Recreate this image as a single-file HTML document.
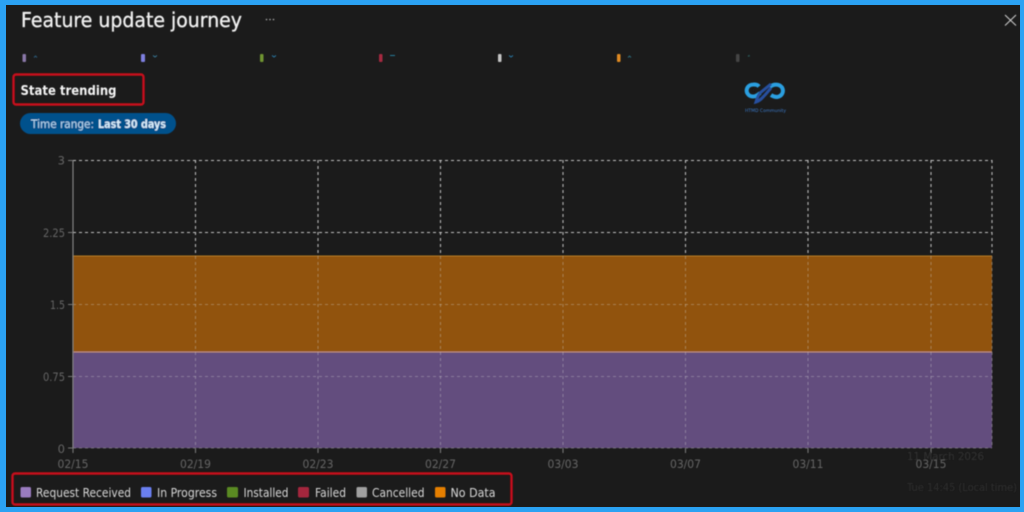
<!DOCTYPE html>
<html><head><meta charset="utf-8"><style>
html,body{margin:0;padding:0;width:1024px;height:512px;overflow:hidden;background:#2ba2f3}
svg{display:block;font-family:"DejaVu Sans","Liberation Sans",sans-serif}
</style></head><body>
<svg width="1024" height="512" viewBox="0 0 1024 512" xmlns="http://www.w3.org/2000/svg">
<defs>
<filter id="b"><feGaussianBlur stdDeviation="0.45"/></filter>
<filter id="g"><feGaussianBlur stdDeviation="0.4"/></filter>
</defs>
<rect width="1024" height="512" fill="#2ba2f3"/>
<rect x="6" y="5" width="1014" height="502" fill="#1b1b1b"/>
<g filter="url(#b)">
<text x="21" y="27" font-size="20" fill="#f2f2f2" stroke="#f2f2f2" stroke-width=".3" textLength="221" lengthAdjust="spacingAndGlyphs">Feature update journey</text>
<g fill="#b0b0b0"><circle cx="266.500" cy="19.500" r=".8"/><circle cx="270" cy="19.500" r=".8"/><circle cx="273.500" cy="19.500" r=".8"/></g>
<path d="M1005 15L1016 25.500M1016 15L1005 25.500" stroke="#d0d0d0" stroke-width="1"/>

<rect x="22.500" y="54" width="3.500" height="8" rx="1" fill="#8a78a8"/>
<rect x="141" y="54" width="4" height="8" rx="1" fill="#7f80e0"/>
<rect x="260" y="54" width="3.500" height="8" rx="1" fill="#6f9430"/>
<rect x="379" y="54" width="3.500" height="8" rx="1" fill="#a52a3f"/>
<rect x="498" y="54" width="3.500" height="8" rx="1" fill="#c4c4c4"/>
<rect x="617" y="54" width="3.500" height="8" rx="1" fill="#e08a20"/>
<rect x="736" y="54" width="3.500" height="8" rx="1" fill="#444"/>
<g stroke-width="1" fill="none">
<path d="M34 57.500l1.500-1.500 1.500 1.500" stroke="#2a5a7a"/>
<path d="M153 55.500l2 1.500 2-1.500" stroke="#3a7a9a"/>
<path d="M272 55.500l2 1.500 2-1.500" stroke="#2a7aa8"/>
<path d="M390 55.500h5" stroke="#2a7a98"/>
<path d="M509 55.500l2 1.500 2-1.500" stroke="#2a7aa8"/>
<path d="M628 57.500l1.500-1.500 1.500 1.500" stroke="#2a6a7a"/>
<path d="M748 56.500l1-1 .5 1" stroke="#2a5a5a"/>
</g>

<rect x="13.500" y="74.500" width="130" height="30" rx="2.500" fill="none" stroke="#c8101a" stroke-width="2.400"/>
<text x="20.500" y="95" font-size="13" font-weight="700" fill="#f4f4f4" textLength="96" lengthAdjust="spacingAndGlyphs">State trending</text>

<rect x="20" y="113" width="156" height="21" rx="10.500" fill="#04518c"/>
<text x="31" y="128" font-size="11.500" fill="#b8d8f0" textLength="63" lengthAdjust="spacingAndGlyphs">Time range:</text>
<text x="98" y="128" font-size="11.500" font-weight="700" fill="#d8ecfa" textLength="68" lengthAdjust="spacingAndGlyphs">Last 30 days</text>

<g fill="none">
<path d="M759 86.500c-2-2.500-9-3-11.500 1-2.500 4.500 1 9 5.500 9 3 0 5-1.500 7-3.500" stroke="#2b9fe0" stroke-width="4"/>
<path d="M770 87c3-3 9-3.500 12 .5 2.500 4.500-.5 9-5 9.500-2.500 0-4-.5-6-2" stroke="#2b9fe0" stroke-width="4"/>
<path d="M771 84l-11 9c-2 2-3 6-4 9 4-1 6-4 9-7l6-7" stroke="#27509f" stroke-width="3"/>
<path d="M752 89.500l3 1.500" stroke="#1b1b1b" stroke-width="1.500"/>
</g>
<text x="745" y="112" font-size="4.500" fill="#3a78c8" textLength="41" lengthAdjust="spacingAndGlyphs">HTMD Community</text>

<rect x="73" y="256" width="919" height="96" fill="#915208"/>
<rect x="73" y="352" width="919" height="96" fill="#644e7e"/>
<path d="M73 256H992" stroke="#b87a20" stroke-width="1"/>
<path d="M73 352H992" stroke="#c09080" stroke-width="1"/>
</g>

<g filter="url(#g)" stroke="#d4d4d4" stroke-width="1.100" fill="none">
<path stroke-dasharray="3 3" opacity=".9" d="M73 160.500H992M73 232.500H992"/>
<path stroke-dasharray="3 3" opacity=".35" d="M73 304.500H992M73 376.500H992M73 448H992"/>
<path stroke-dasharray="3 3" opacity=".85" d="M195.500 160V256M318 160V256M440.500 160V256M563 160V256M685.500 160V256M808 160V256M931 160V256M992 160V256"/>
<path stroke-dasharray="3 3" opacity=".35" d="M195.500 256V448M318 256V448M440.500 256V448M563 256V448M685.500 256V448M808 256V448M931 256V448M992 256V448"/>
<path d="M73 160V448" stroke="#8c8c8c"/>
<path d="M68 160.500h5M68 232.500h5M68 304.500h5M68 376.500h5M68 448h5M73 448v5M195.500 448v5M318 448v5M440.500 448v5M563 448v5M685.500 448v5M808 448v5M931 448v5" stroke="#777"/>
</g>

<g filter="url(#b)" font-size="11.500" fill="#666">
<g text-anchor="end">
<text x="65" y="164.500">3</text>
<text x="65" y="237" textLength="22" lengthAdjust="spacingAndGlyphs">2.25</text>
<text x="65" y="309" textLength="15" lengthAdjust="spacingAndGlyphs">1.5</text>
<text x="65" y="381" textLength="22" lengthAdjust="spacingAndGlyphs">0.75</text>
<text x="65" y="453">0</text>
</g>
<g>
<text x="57.500" y="468" textLength="31" lengthAdjust="spacingAndGlyphs">02/15</text>
<text x="180" y="468" textLength="31" lengthAdjust="spacingAndGlyphs">02/19</text>
<text x="302.500" y="468" textLength="31" lengthAdjust="spacingAndGlyphs">02/23</text>
<text x="425" y="468" textLength="31" lengthAdjust="spacingAndGlyphs">02/27</text>
<text x="547.500" y="468" textLength="31" lengthAdjust="spacingAndGlyphs">03/03</text>
<text x="670" y="468" textLength="31" lengthAdjust="spacingAndGlyphs">03/07</text>
<text x="792.500" y="468" textLength="31" lengthAdjust="spacingAndGlyphs">03/11</text>
<text x="915.500" y="468" textLength="31" lengthAdjust="spacingAndGlyphs">03/15</text>
</g>
<text x="907" y="460" font-size="10.500" fill="#333" textLength="77" lengthAdjust="spacingAndGlyphs">11 March 2026</text>
<text x="907" y="491" font-size="10.500" fill="#2e2e2e" textLength="110" lengthAdjust="spacingAndGlyphs">Tue 14:45 (Local time)</text>

<rect x="12.500" y="473.500" width="499" height="31" rx="2.500" fill="none" stroke="#c8101a" stroke-width="2.400"/>
<g font-size="12" fill="#d8d8d8">
<rect x="20.500" y="487" width="10.500" height="10.500" rx="1.500" fill="#9a7cc0"/>
<text x="36" y="497" textLength="95" lengthAdjust="spacingAndGlyphs">Request Received</text>
<rect x="141" y="487" width="10.500" height="10.500" rx="1.500" fill="#6a7ff0"/>
<text x="157" y="497" textLength="60" lengthAdjust="spacingAndGlyphs">In Progress</text>
<rect x="227" y="487" width="11" height="10.500" rx="1.500" fill="#5a8a20"/>
<text x="243.500" y="497" textLength="45" lengthAdjust="spacingAndGlyphs">Installed</text>
<rect x="298" y="487" width="11" height="10.500" rx="1.500" fill="#a4263c"/>
<text x="315" y="497" textLength="31" lengthAdjust="spacingAndGlyphs">Failed</text>
<rect x="356.500" y="487" width="10.500" height="10.500" rx="1.500" fill="#a0a0a0"/>
<text x="372" y="497" textLength="52.500" lengthAdjust="spacingAndGlyphs">Cancelled</text>
<rect x="435" y="487" width="10.500" height="10.500" rx="1.500" fill="#e57f00"/>
<text x="450.500" y="497" textLength="45" lengthAdjust="spacingAndGlyphs">No Data</text>
</g>
</g>
</svg>
</body></html>
